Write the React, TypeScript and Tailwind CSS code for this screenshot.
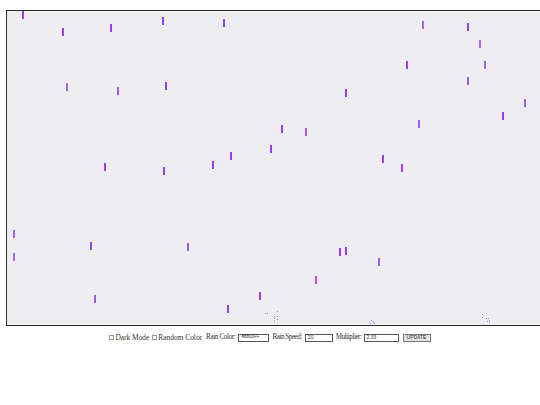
import React from 'react';

type Drop = [number, number, number?];

// rain drops, page coordinates [centerX, top, opacity]
const drops: Drop[] = [
  [23, 11], [63, 28], [111, 24], [163, 17], [224, 19],
  [67, 83, 0.75], [118, 87, 0.8], [166, 82], [231, 152], [105, 163],
  [164, 167], [213, 161], [14, 230, 0.75], [91, 242], [188, 243, 0.8],
  [14, 253, 0.75], [95, 295, 0.8], [260, 292], [228, 305],
  [423, 21, 0.75], [468, 23], [480, 40, 0.75], [407, 61], [485, 61, 0.75],
  [468, 77, 0.8], [346, 89], [525, 99, 0.8], [503, 112], [419, 120, 0.8],
  [282, 125], [306, 128, 0.8], [271, 145], [383, 155], [402, 164],
  [340, 248], [346, 247], [379, 258, 0.8], [316, 276, 0.8],
];

// splash particles
const dots: [number, number][] = [
  [265, 313], [267, 313], [277, 311],
  [274, 316], [274, 318], [274, 320], [274, 322], [277, 316], [277, 319],
  [369, 321], [371, 320], [373, 322], [370, 323], [374, 323],
  [482, 314], [482, 317], [486, 318], [488, 318], [489, 320], [487, 321], [489, 322],
];

const App: React.FC = () => {
  return (
    <div className="w-full overflow-hidden bg-white pt-[10px] pl-[6px]" style={{ minHeight: 405 }}>
      <div className="w-[560px] h-[316px] border border-[#2b2b2b] bg-[#eeeef0]">
        <svg width="558" height="314" viewBox="7 11 558 314" className="block">
          {drops.map(([x, y, o], i) => (
            <rect key={i} x={x - 1} y={y} width={2} height={8} fill="#9433ee" opacity={o ?? 0.95} />
          ))}
          {dots.map(([x, y], i) => (
            <rect key={'d' + i} x={x} y={y} width={1} height={1} fill="#a35cf0" opacity={0.8} />
          ))}
        </svg>
      </div>

      <div className="-ml-[6px] mt-[7px] flex h-[9px] items-center justify-center leading-none text-[#333] font-['Liberation_Serif',serif]">
        <span className="mr-[1px] inline-block h-[5px] w-[5px] border border-[#999] bg-white" />
        <span className="text-[7.4px]">Dark Mode</span>
        <span className="ml-[3px] mr-[1px] inline-block h-[5px] w-[5px] border border-[#999] bg-white" />
        <span className="text-[7.4px]">Random Color</span>
        <span className="ml-[4px] text-[7.2px] tracking-[-0.4px]">Rain Color:</span>
        <span className="ml-[3px] flex h-[8px] w-[31px] items-center border border-[#555] bg-white px-[2px] text-[4.5px] font-['Liberation_Sans',sans-serif]">
          #8800FF
        </span>
        <span className="ml-[3px] text-[7.2px] tracking-[-0.5px]">Rain Speed:</span>
        <span className="ml-[3px] flex h-[8px] w-[28px] items-center border border-[#555] bg-white px-[2px] text-[5px] font-['Liberation_Sans',sans-serif]">
          20
        </span>
        <span className="ml-[3px] text-[7.2px] tracking-[-0.5px]">Multiplier:</span>
        <span className="ml-[2px] flex h-[8px] w-[35px] items-center border border-[#555] bg-white px-[2px] text-[5px] font-['Liberation_Sans',sans-serif]">
          2.33
        </span>
        <span className="ml-[4px] flex h-[8px] w-[28px] items-center justify-center border border-[#777] bg-[#e4e4e4] text-[5px] font-['Liberation_Sans',sans-serif]">
          UPDATE
        </span>
      </div>
    </div>
  );
};

export default App;
